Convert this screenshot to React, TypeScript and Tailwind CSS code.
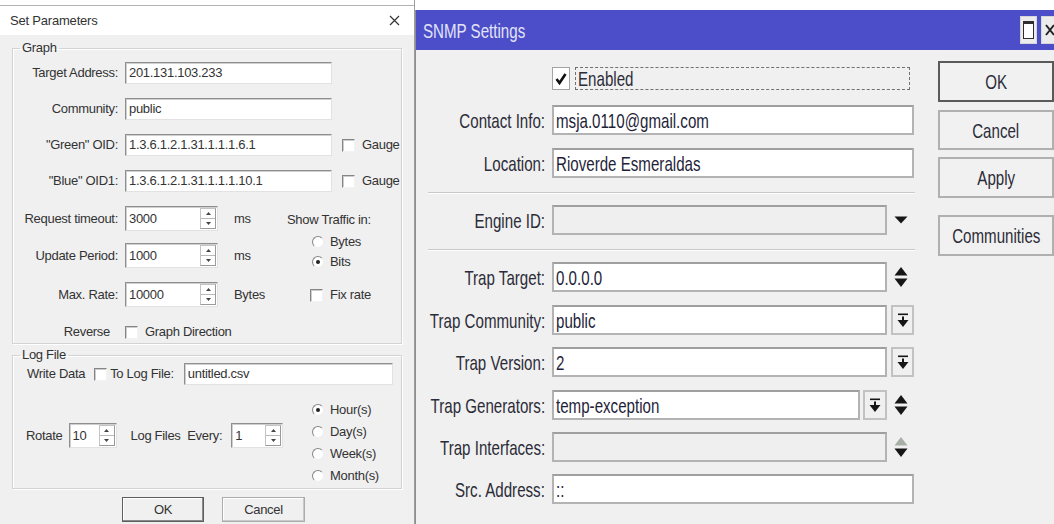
import React from "react";

type Kids = { children?: React.ReactNode; className?: string };

/* ---------- classic win32 widgets (Set Parameters dialog) ---------- */

function Edit({ className = "", value }: { className?: string; value?: string }) {
  return (
    <div
      className={`flex h-full items-center border border-[#8f8f8f] border-r-[#e2e2e2] border-b-[#e2e2e2] bg-white px-[3px] shadow-[inset_1px_1px_0_#cfcfcf] ${className}`}
    >
      {value}
    </div>
  );
}

function Box({ className = "" }: { className?: string }) {
  return (
    <span
      className={`inline-block h-[13px] w-[13px] shrink-0 border border-[#858585] border-r-[#f2f2f2] border-b-[#f2f2f2] bg-white shadow-[inset_1px_1px_0_#cdcdcd] ${className}`}
    />
  );
}

function Radio({ on }: { on?: boolean }) {
  return (
    <span className="inline-flex h-[12px] w-[12px] shrink-0 items-center justify-center rounded-full border border-[#858585] border-r-[#efefef] border-b-[#efefef] bg-white">
      {on && <span className="h-[4px] w-[4px] rounded-full bg-[#222]" />}
    </span>
  );
}

function SpinEdit({ className = "", value }: { className?: string; value: string }) {
  return (
    <div
      className={`flex h-[25px] border border-[#8f8f8f] border-r-[#e2e2e2] border-b-[#e2e2e2] bg-white shadow-[inset_1px_1px_0_#cfcfcf] ${className}`}
    >
      <span className="flex flex-1 items-center px-[3px]">{value}</span>
      <div className="my-[1px] mr-[1px] flex w-[16px] flex-col border border-[#c4c4c4] border-r-[#9a9a9a] border-b-[#9a9a9a]">
        <div className="flex flex-1 items-center justify-center border-b border-[#b9b9b9]">
          <svg width="5" height="3" viewBox="0 0 5 3">
            <path d="M2.5 0 L5 3 H0 Z" fill="#444" />
          </svg>
        </div>
        <div className="flex flex-1 items-center justify-center">
          <svg width="5" height="3" viewBox="0 0 5 3">
            <path d="M0 0 H5 L2.5 3 Z" fill="#444" />
          </svg>
        </div>
      </div>
    </div>
  );
}

function WinButton({ label, def, className = "" }: { label: string; def?: boolean; className?: string }) {
  return (
    <div
      className={`flex h-[25px] items-center justify-center border bg-[#f0f0f0] ${
        def
          ? "border-[#5e5e5e] shadow-[inset_-1px_-1px_0_#8a8a8a,inset_1px_1px_0_#ffffff]"
          : "border-[#acacac] shadow-[inset_-1px_-1px_0_#c9c9c9,inset_1px_1px_0_#ffffff]"
      } ${className}`}
    >
      {label}
    </div>
  );
}

function SpinRow({ label, value, unit, className = "" }: { label: string; value: string; unit: string; className?: string }) {
  return (
    <div className={`flex h-[25px] items-center ${className}`}>
      <span className="w-[105px] text-right">{label}</span>
      <SpinEdit className="ml-[7px] w-[93px]" value={value} />
      <span className="ml-[16px]">{unit}</span>
    </div>
  );
}

function SetParameters() {
  return (
    <div className="h-full w-[415px] shrink-0 border-r border-[#9d9d9d] pt-[5px] text-[13px] leading-[14px] tracking-[-0.3px] text-[#333]">
      <div className="flex h-full flex-col border-t border-[#b4b4b4]">
        <div className="flex h-[29px] items-center justify-between bg-white pl-[10px] pr-[14px]">
          <span className="tracking-[-0.2px]">Set Parameters</span>
          <svg width="11" height="11" viewBox="0 0 11 11">
            <path d="M1 1 L10 10 M10 1 L1 10" stroke="#333" strokeWidth="1.2" />
          </svg>
        </div>

        <div className="flex-1 bg-[#f0f0f0] px-[12px] pt-[6px]">
          {/* Graph */}
          <fieldset className="h-[303px] border border-[#d3d3d3] shadow-[inset_1px_1px_0_#ffffff,1px_1px_0_#ffffff]">
            <legend className="ml-[7px] px-[2px]">Graph</legend>

            <div className="mt-[7px] flex h-[22px] items-center">
              <span className="w-[105px] text-right">Target Address:</span>
              <Edit className="ml-[7px] w-[207px]" value="201.131.103.233" />
            </div>
            <div className="mt-[14px] flex h-[22px] items-center">
              <span className="w-[105px] text-right">Community:</span>
              <Edit className="ml-[7px] w-[207px]" value="public" />
            </div>
            <div className="mt-[14px] flex h-[22px] items-center">
              <span className="w-[105px] text-right">&quot;Green&quot; OID:</span>
              <Edit className="ml-[7px] w-[207px]" value="1.3.6.1.2.1.31.1.1.1.6.1" />
              <Box className="ml-[10px]" />
              <span className="ml-[7px]">Gauge</span>
            </div>
            <div className="mt-[14px] flex h-[22px] items-center">
              <span className="w-[105px] text-right">&quot;Blue&quot; OID1:</span>
              <Edit className="ml-[7px] w-[207px]" value="1.3.6.1.2.1.31.1.1.1.10.1" />
              <Box className="ml-[10px]" />
              <span className="ml-[7px]">Gauge</span>
            </div>

            <div className="mt-[14px] flex">
              <div className="w-[274px]">
                <SpinRow label="Request timeout:" value="3000" unit="ms" />
                <SpinRow className="mt-[12px]" label="Update Period:" value="1000" unit="ms" />
                <SpinRow className="mt-[14px]" label="Max. Rate:" value="10000" unit="Bytes" />
              </div>
              <div className="flex flex-col">
                <span className="mt-[7px]">Show Traffic in:</span>
                <div className="ml-[25px] mt-[8px] flex h-[14px] items-center gap-[6px]">
                  <Radio />
                  <span>Bytes</span>
                </div>
                <div className="ml-[25px] mt-[6px] flex h-[14px] items-center gap-[6px]">
                  <Radio on />
                  <span>Bits</span>
                </div>
                <div className="ml-[23px] mt-[19px] flex h-[14px] items-center gap-[7px]">
                  <Box />
                  <span>Fix rate</span>
                </div>
              </div>
            </div>

            <div className="mt-[18px] flex h-[14px] items-center">
              <span className="w-[97px] text-right">Reverse</span>
              <Box className="ml-[15px]" />
              <span className="ml-[7px]">Graph Direction</span>
            </div>
          </fieldset>

          {/* Log File */}
          <fieldset className="mt-[4px] h-[141px] border border-[#d3d3d3] shadow-[inset_1px_1px_0_#ffffff,1px_1px_0_#ffffff]">
            <legend className="ml-[7px] px-[2px]">Log File</legend>
            <div className="mt-[1px] flex h-[22px] items-center pl-[14px]">
              <span>Write Data</span>
              <Box className="ml-[9px]" />
              <span className="ml-[3px]">To Log File:</span>
              <Edit className="ml-[10px] w-[209px]" value="untitled.csv" />
            </div>
            <div className="flex">
              <div className="mt-[38px] flex h-[25px] w-[299px] items-center pl-[13px]">
                <span>Rotate</span>
                <SpinEdit className="ml-[6px] w-[48px]" value="10" />
                <span className="ml-[14px] whitespace-pre">Log Files  Every:</span>
                <SpinEdit className="ml-[9px] w-[52px]" value="1" />
              </div>
              <div className="mt-[18px] flex flex-col gap-[9px]">
                {[
                  ["Hour(s)", true],
                  ["Day(s)", false],
                  ["Week(s)", false],
                  ["Month(s)", false],
                ].map(([t, on]) => (
                  <div key={t as string} className="flex h-[13px] items-center gap-[6px]">
                    <Radio on={on as boolean} />
                    <span>{t as string}</span>
                  </div>
                ))}
              </div>
            </div>
          </fieldset>

          <div className="mt-[8px] flex">
            <WinButton def label="OK" className="ml-[110px] w-[82px]" />
            <WinButton label="Cancel" className="ml-[18px] w-[83px]" />
          </div>
        </div>
      </div>
    </div>
  );
}

/* ---------- Winbox style widgets (SNMP Settings) ---------- */

function Narrow({ children, className = "origin-left" }: Kids) {
  return <span className={`inline-block whitespace-nowrap scale-x-[0.72] ${className}`}>{children}</span>;
}

function TextBox({ value, gray, className = "flex-1" }: { value?: string; gray?: boolean; className?: string }) {
  return (
    <div
      className={`flex items-center border-2 border-[#b3b3b3] border-t-[#9f9f9f] px-[2px] ${gray ? "bg-[#efefef]" : "bg-white"} ${className}`}
    >
      {value && <Narrow className="origin-left text-[#1f1f3a]">{value}</Narrow>}
    </div>
  );
}

function Row({ label, className, children }: { label: string; className: string; children: React.ReactNode }) {
  return (
    <div className={`flex h-[30px] ${className}`}>
      <div className="flex w-[129px] items-center justify-end">
        <Narrow className="origin-right">{label}</Narrow>
      </div>
      <div className="ml-[7px] flex w-[362px]">{children}</div>
    </div>
  );
}

function Slot({ children }: Kids) {
  return <div className="flex w-[27px] items-center justify-center">{children}</div>;
}

function UpDown({ dim }: { dim?: boolean }) {
  return (
    <svg width="14" height="24" viewBox="0 0 14 24">
      <path d="M7 2 L13.5 10.5 H0.5 Z" fill={dim ? "#a7afa7" : "#161616"} />
      <path d="M0.5 13.5 H13.5 L7 22 Z" fill="#161616" />
    </svg>
  );
}

function DropDown() {
  return (
    <svg width="14" height="8" viewBox="0 0 14 8">
      <path d="M0.5 0.5 H13.5 L7 7.5 Z" fill="#161616" />
    </svg>
  );
}

function ListButton({ className = "" }: { className?: string }) {
  return (
    <div className={`flex items-center justify-center border-2 border-[#c2c2c2] bg-[#f0f0f0] ${className}`}>
      <svg width="12" height="15" viewBox="0 0 12 15">
        <rect x="1" y="0.5" width="10" height="1.6" fill="#161616" />
        <rect x="5" y="3.5" width="2" height="4" fill="#161616" />
        <path d="M0.5 7 H11.5 L6 14 Z" fill="#161616" />
      </svg>
    </div>
  );
}

function SideButton({ label, def, className }: { label: string; def?: boolean; className: string }) {
  return (
    <div
      className={`flex items-center justify-center bg-[#f1f1f1] ${
        def ? "border-2 border-[#5a5a5a]" : "border-2 border-[#b0b0b0]"
      } ${className}`}
    >
      <Narrow className="origin-center">{label}</Narrow>
    </div>
  );
}

function SnmpSettings() {
  return (
    <div className="mt-[10px] flex flex-1 flex-col border-l border-[#8e8e8e] text-[21px] leading-none text-[#2c2c38]">
      <div className="flex h-[40px] shrink-0 items-center overflow-hidden bg-[#4b4ec8] pl-[7px]">
        <Narrow className="origin-left text-[#e3e3f7]">SNMP Settings</Narrow>
        <div className="ml-auto mr-[-4px] flex gap-[4px]">
          <div className="flex h-[28px] w-[17px] items-center justify-center border border-[#d6d6d6] bg-[#ececec]">
            <div className="h-[18px] w-[11px] border border-t-[3px] border-[#2e2e2e] bg-white" />
          </div>
          <div className="flex h-[28px] w-[17px] items-center justify-center border border-[#d6d6d6] bg-[#ececec]">
            <svg width="10" height="12" viewBox="0 0 10 12">
              <path d="M1 1 L9 11 M9 1 L1 11" stroke="#222" strokeWidth="2" />
            </svg>
          </div>
        </div>
      </div>

      <div className="flex flex-1 bg-[#f0f0f0]">
        <div className="w-[498px]">
          <div className="mt-[17px] flex h-[23px]">
            <div className="w-[129px]" />
            <div className="ml-[7px] flex">
              <span className="flex h-[23px] w-[18px] items-center justify-center border border-[#a4a4a4] bg-white">
                <svg width="12" height="13" viewBox="0 0 12 13">
                  <path d="M1.5 7 L4.5 11 L10.5 2" fill="none" stroke="#111" strokeWidth="2.6" />
                </svg>
              </span>
              <div className="ml-[5px] flex w-[335px] items-center border border-dashed border-[#707070] pl-[2px]">
                <Narrow>Enabled</Narrow>
              </div>
            </div>
          </div>

          <Row label="Contact Info:" className="mt-[15px]">
            <TextBox value="msja.0110@gmail.com" />
          </Row>
          <Row label="Location:" className="mt-[13px]">
            <TextBox value="Rioverde Esmeraldas" />
          </Row>

          <div className="ml-[12px] mt-[14px] h-[2px] w-[487px] border-t border-b border-t-[#c9c9c9] border-b-white" />

          <Row label="Engine ID:" className="mt-[11px]">
            <TextBox gray />
            <Slot>
              <DropDown />
            </Slot>
          </Row>

          <div className="ml-[12px] mt-[14px] h-[2px] w-[487px] border-t border-b border-t-[#c9c9c9] border-b-white" />

          <Row label="Trap Target:" className="mt-[11px]">
            <TextBox value="0.0.0.0" />
            <Slot>
              <UpDown />
            </Slot>
          </Row>
          <Row label="Trap Community:" className="mt-[13px]">
            <TextBox value="public" />
            <ListButton className="ml-[4px] w-[23px]" />
          </Row>
          <Row label="Trap Version:" className="mt-[12px]">
            <TextBox value="2" />
            <ListButton className="ml-[4px] w-[23px]" />
          </Row>
          <Row label="Trap Generators:" className="mt-[13px]">
            <TextBox value="temp-exception" className="w-[308px]" />
            <ListButton className="ml-[3px] w-[24px]" />
            <Slot>
              <UpDown />
            </Slot>
          </Row>
          <Row label="Trap Interfaces:" className="mt-[12px]">
            <TextBox gray />
            <Slot>
              <UpDown dim />
            </Slot>
          </Row>
          <Row label="Src. Address:" className="mt-[12px]">
            <TextBox value="::" />
          </Row>
        </div>

        <div className="ml-[24px] flex w-[116px] flex-col">
          <SideButton def label="OK" className="mt-[11px] h-[41px]" />
          <SideButton label="Cancel" className="mt-[8px] h-[40px]" />
          <SideButton label="Apply" className="mt-[7px] h-[41px]" />
          <SideButton label="Communities" className="mt-[17px] h-[41px]" />
        </div>
      </div>
    </div>
  );
}

export default function App() {
  return (
    <div className="flex h-[524px] w-[1054px] overflow-hidden bg-white font-['Liberation_Sans',Arial,sans-serif]">
      <SetParameters />
      <SnmpSettings />
    </div>
  );
}
